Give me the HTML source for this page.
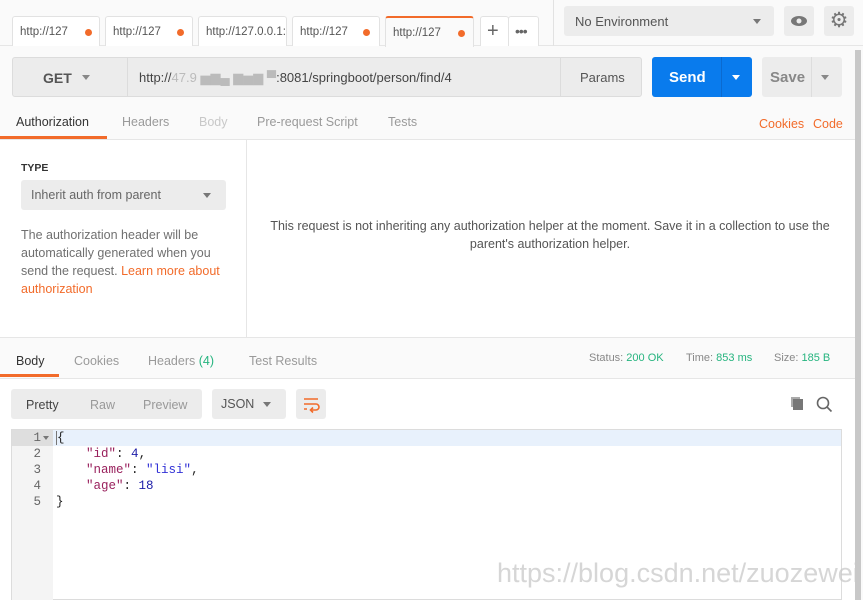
<!DOCTYPE html>
<html><head><style>
*{box-sizing:border-box;margin:0;padding:0}
body{width:863px;height:600px;overflow:hidden;background:#fafafa;font-family:"Liberation Sans",sans-serif;font-size:12px;color:#505050;position:relative}
.a{position:absolute}
.tab{position:absolute;top:16px;height:30px;background:#fff;border:1px solid #e2e2e2;border-bottom:none;border-radius:3px 3px 0 0;font-size:11.5px;color:#555;padding:9px 0 0 7px;white-space:nowrap;overflow:hidden}
.dot{position:absolute;top:12px;width:7px;height:7px;border-radius:50%;background:#f26b2a}
.gray{background:#ececec;border-radius:3px}
.t{position:absolute;font-size:12.5px;color:#9a9a9a}
</style></head><body>
<div class="a" style="left:0;top:0;width:863px;height:46px;background:#fafafa;border-bottom:1px solid #e6e6e6"></div>
<div class="tab" style="left:12px;width:88px">http://127<span class="dot" style="left:72px"></span></div>
<div class="tab" style="left:105px;width:88px">http://127<span class="dot" style="left:71px"></span></div>
<div class="tab" style="left:198px;width:89px">http://127.0.0.1:</div>
<div class="tab" style="left:292px;width:88px">http://127<span class="dot" style="left:70px"></span></div>
<div class="tab" style="left:385px;width:89px;border-top:2px solid #f26b2a;background:#fafafa;height:31px">http://127<span class="dot" style="left:72px"></span></div>
<div class="tab" style="left:480px;width:29px;font-size:20px;padding:3px 0 0 6px;color:#666">+</div>
<div class="tab" style="left:508px;width:31px;font-size:14px;padding:6px 0 0 6px;color:#666;letter-spacing:-1px">•••</div>
<div class="a" style="left:553px;top:0;width:1px;height:46px;background:#e2e2e2"></div>
<div class="a gray" style="left:564px;top:6px;width:210px;height:30px;font-size:13px;color:#555;padding:8px 0 0 11px">No Environment<span class="a" style="left:189px;top:13px;border:4px solid transparent;border-top:5px solid #777"></span></div>
<div class="a gray" style="left:784px;top:6px;width:30px;height:30px"><svg width="30" height="30"><ellipse cx="15" cy="15" rx="8" ry="5" fill="#777"/><circle cx="15" cy="15" r="2.5" fill="#ececec"/></svg></div>
<div class="a gray" style="left:824px;top:6px;width:30px;height:30px;font-size:21px;color:#777;text-align:center;line-height:29px">⚙</div>
<div class="a" style="left:855px;top:50px;width:6px;height:550px;background:#c8c8c8"></div>

<div class="a gray" style="left:12px;top:57px;width:630px;height:40px;border:1px solid #dcdcdc"></div>
<div class="a" style="left:127px;top:58px;width:1px;height:38px;background:#dcdcdc"></div>
<div class="a" style="left:560px;top:58px;width:1px;height:38px;background:#dcdcdc"></div>
<div class="a" style="left:43px;top:70px;font-size:14px;font-weight:bold;color:#555">GET</div>
<div class="a" style="left:82px;top:75px;border:4px solid transparent;border-top:5px solid #888"></div>
<div class="a" style="left:139px;top:70px;font-size:13px;color:#444">http://<span style="color:#bbb">47.9 ▅▆▄ ▆▅▆ ▀</span>:8081/springboot/person/find/4</div>
<div class="a" style="left:580px;top:70px;font-size:13px;color:#555">Params</div>
<div class="a" style="left:652px;top:57px;width:100px;height:40px;background:#097bed;border-radius:3px"></div>
<div class="a" style="left:721px;top:57px;width:1px;height:40px;background:#0a6ad0"></div>
<div class="a" style="left:669px;top:69px;font-size:15px;font-weight:bold;color:#fff">Send</div>
<div class="a" style="left:732px;top:75px;border:4px solid transparent;border-top:5px solid #fff"></div>
<div class="a gray" style="left:762px;top:57px;width:80px;height:40px"></div>
<div class="a" style="left:811px;top:57px;width:1px;height:40px;background:#ddd"></div>
<div class="a" style="left:770px;top:69px;font-size:15px;font-weight:bold;color:#888">Save</div>
<div class="a" style="left:821px;top:75px;border:4px solid transparent;border-top:5px solid #888"></div>

<div class="t" style="left:16px;top:115px;color:#333">Authorization</div>
<div class="a" style="left:0;top:136px;width:107px;height:3px;background:#f26b2a"></div>
<div class="t" style="left:122px;top:115px">Headers</div>
<div class="t" style="left:199px;top:115px;color:#c8c8c8">Body</div>
<div class="t" style="left:257px;top:115px">Pre-request Script</div>
<div class="t" style="left:388px;top:115px">Tests</div>
<div class="t" style="left:759px;top:117px;color:#f26b2a">Cookies</div>
<div class="t" style="left:813px;top:117px;color:#f26b2a">Code</div>
<div class="a" style="left:0;top:139px;width:855px;height:1px;background:#e6e6e6"></div>

<div class="a" style="left:0;top:140px;width:855px;height:197px;background:#fff"></div>
<div class="a" style="left:246px;top:140px;width:1px;height:197px;background:#e6e6e6"></div>
<div class="a" style="left:21px;top:162px;font-size:10.5px;font-weight:bold;color:#333">TYPE</div>
<div class="a gray" style="left:21px;top:180px;width:205px;height:30px;font-size:12.5px;color:#666;padding:8px 0 0 10px">Inherit auth from parent<span class="a" style="left:182px;top:13px;border:4px solid transparent;border-top:5px solid #777"></span></div>
<div class="a" style="left:21px;top:226px;width:215px;font-size:12.5px;line-height:18px;color:#707070">The authorization header will be automatically generated when you send the request. <span style="color:#f26b2a">Learn more about authorization</span></div>
<div class="a" style="left:270px;top:217px;width:560px;text-align:center;font-size:12.5px;line-height:18px;color:#555">This request is not inheriting any authorization helper at the moment. Save it in a collection to use the parent's authorization helper.</div>
<div class="a" style="left:0;top:337px;width:855px;height:1px;background:#e6e6e6"></div>

<div class="t" style="left:16px;top:354px;color:#333">Body</div>
<div class="a" style="left:0;top:374px;width:59px;height:3px;background:#f26b2a"></div>
<div class="t" style="left:74px;top:354px">Cookies</div>
<div class="t" style="left:148px;top:354px">Headers <span style="color:#26b47f">(4)</span></div>
<div class="t" style="left:249px;top:354px">Test Results</div>
<div class="a" style="left:589px;top:352px;font-size:11px;color:#888">Status: <span style="color:#26b47f">200 OK</span></div>
<div class="a" style="left:686px;top:352px;font-size:11px;color:#888">Time: <span style="color:#26b47f">853 ms</span></div>
<div class="a" style="left:774px;top:352px;font-size:11px;color:#888">Size: <span style="color:#26b47f">185 B</span></div>
<div class="a" style="left:0;top:378px;width:855px;height:1px;background:#e6e6e6"></div>
<div class="a" style="left:0;top:379px;width:855px;height:221px;background:#fff"></div>

<div class="a gray" style="left:11px;top:389px;width:191px;height:30px"></div>
<div class="a" style="left:26px;top:398px;font-size:12.5px;color:#444">Pretty</div>
<div class="a" style="left:90px;top:398px;font-size:12.5px;color:#999">Raw</div>
<div class="a" style="left:143px;top:398px;font-size:12.5px;color:#999">Preview</div>
<div class="a gray" style="left:212px;top:389px;width:74px;height:30px;font-size:12.5px;color:#555;padding:8px 0 0 9px">JSON<span class="a" style="left:51px;top:13px;border:4px solid transparent;border-top:5px solid #777"></span></div>
<div class="a gray" style="left:296px;top:389px;width:30px;height:30px"><svg width="30" height="30" fill="none" stroke="#f26b2a" stroke-width="1.6"><path d="M8 10h14M8 15h12a3 3 0 0 1 0 6h-5M8 20h3"/><path d="M17 18.5l-2.5 2.5 2.5 2.5"/></svg></div>
<svg class="a" style="left:789px;top:395px" width="16" height="16"><rect x="2" y="2" width="9" height="10" fill="#aaa"/><rect x="4" y="4" width="10" height="11" fill="#777"/></svg>
<svg class="a" style="left:815px;top:395px" width="18" height="18" fill="none" stroke="#666" stroke-width="1.6"><circle cx="8" cy="8" r="5.5"/><path d="M12 12l4.5 4.5"/></svg>

<div class="a" style="left:11px;top:429px;width:831px;height:171px;border:1px solid #dcdcdc;background:#fff"></div>
<div class="a" style="left:12px;top:430px;width:41px;height:170px;background:#f4f4f4"></div>
<div class="a" style="left:12px;top:430px;width:829px;height:16px;background:#e8f1fc"></div>
<div class="a" style="left:12px;top:430px;width:41px;height:16px;background:#dedede"></div>
<div class="a" style="left:56px;top:430px;width:780px;font-family:'Liberation Mono',monospace;font-size:12.5px;line-height:16px;color:#222;white-space:pre"><span style="border-left:1px solid #777"></span>{
    <span style="color:#99205c">"id"</span>: <span style="color:#1d1da8">4</span>,
    <span style="color:#99205c">"name"</span>: <span style="color:#3131d6">"lisi"</span>,
    <span style="color:#99205c">"age"</span>: <span style="color:#1d1da8">18</span>
}</div>
<div class="a" style="left:12px;top:430px;width:29px;text-align:right;font-family:'Liberation Mono',monospace;font-size:12.5px;line-height:16px;color:#666;white-space:pre">1
2
3
4
5</div>
<div class="a" style="left:43px;top:436px;border:3px solid transparent;border-top:4px solid #777"></div>
<div class="a" style="left:497px;top:558px;font-size:27px;color:rgba(200,200,200,0.75);white-space:nowrap">https://blog.csdn.net/zuozewei</div>
</body></html>
